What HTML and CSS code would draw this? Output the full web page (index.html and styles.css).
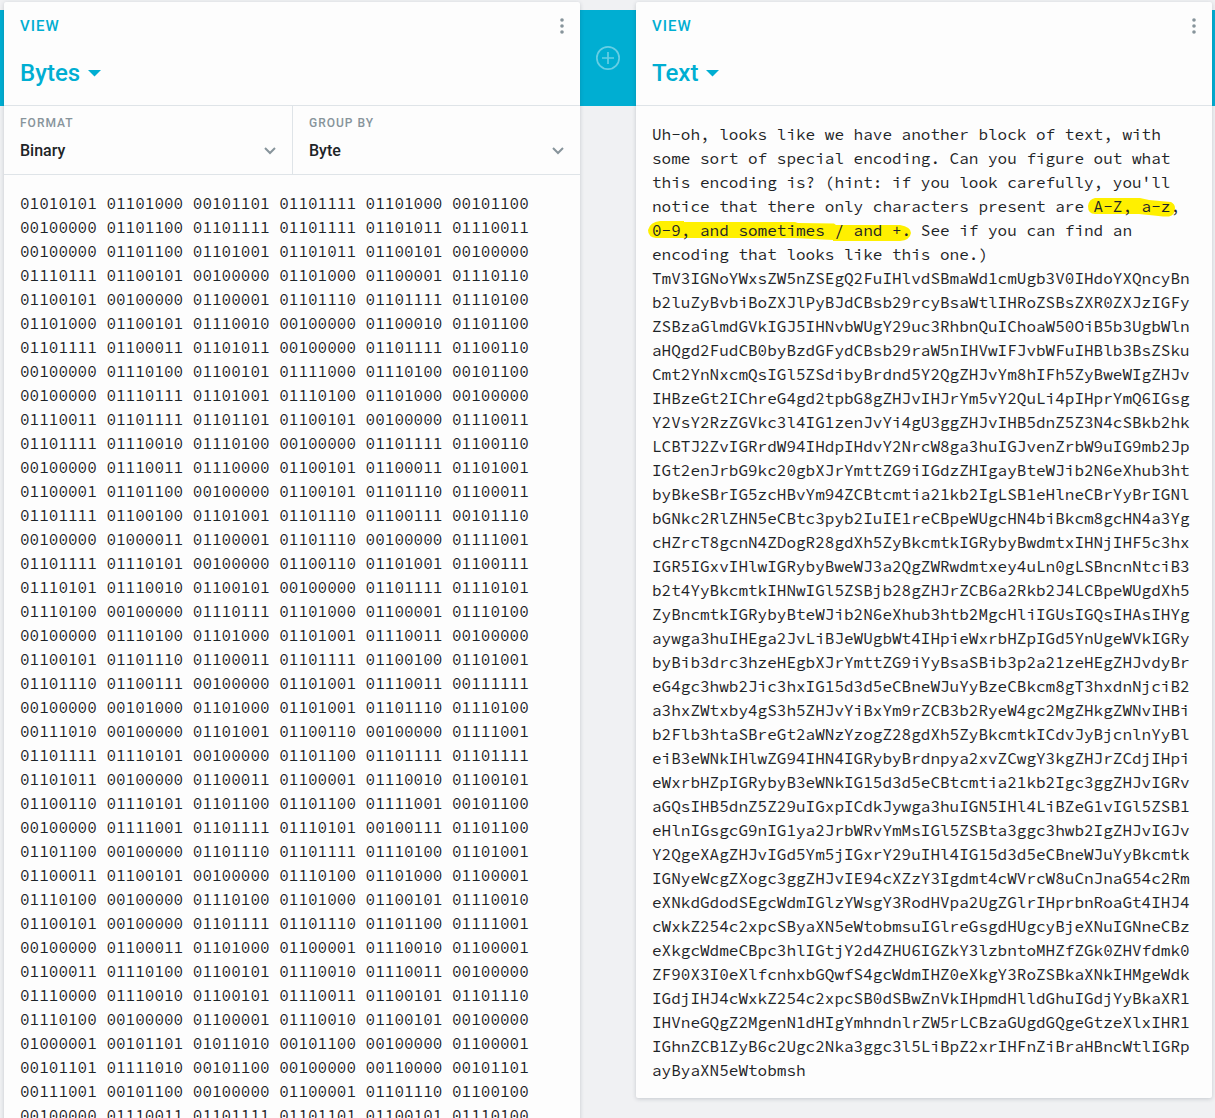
FILE: index.html
```html
<!DOCTYPE html>
<html lang="en">
<head>
<meta charset="utf-8">
<title>Bytes to Text</title>
<link rel="stylesheet" href="styles.css">
</head>
<body>
<main class="pipeline">
  <div class="pipe"></div>
  <section class="brick">
    <header class="brick-header">
      <div class="brick-top">
        <a class="brick-kind" href="#">VIEW</a>
        <button class="icon-button" type="button" aria-label="Brick menu">
          <svg width="4" height="16" viewBox="0 0 4 16"><g fill="#87949b"><circle cx="2" cy="2" r="1.8"/><circle cx="2" cy="8" r="1.8"/><circle cx="2" cy="14" r="1.8"/></g></svg>
        </button>
      </div>
      <button class="brick-title" type="button">Bytes
        <svg width="13" height="7" viewBox="0 0 13 7"><path d="M0 0H13L6.500 6.500Z" fill="#00aed2"/></svg>
      </button>
    </header>
    <div class="settings">
      <div class="field">
        <label class="field-label" for="format">FORMAT</label>
        <div class="field-control">
          <select class="field-select" id="format"><option>Binary</option></select>
          <svg class="chevron" width="12" height="8" viewBox="0 0 12 8"><path d="M1 1L6 6L11 1" fill="none" stroke="#87949b" stroke-width="2"/></svg>
        </div>
      </div>
      <div class="field">
        <label class="field-label" for="group">GROUP BY</label>
        <div class="field-control">
          <select class="field-select" id="group"><option>Byte</option></select>
          <svg class="chevron" width="12" height="8" viewBox="0 0 12 8"><path d="M1 1L6 6L11 1" fill="none" stroke="#87949b" stroke-width="2"/></svg>
        </div>
      </div>
    </div>
    <div class="content">01010101 01101000 00101101 01101111 01101000 00101100
00100000 01101100 01101111 01101111 01101011 01110011
00100000 01101100 01101001 01101011 01100101 00100000
01110111 01100101 00100000 01101000 01100001 01110110
01100101 00100000 01100001 01101110 01101111 01110100
01101000 01100101 01110010 00100000 01100010 01101100
01101111 01100011 01101011 00100000 01101111 01100110
00100000 01110100 01100101 01111000 01110100 00101100
00100000 01110111 01101001 01110100 01101000 00100000
01110011 01101111 01101101 01100101 00100000 01110011
01101111 01110010 01110100 00100000 01101111 01100110
00100000 01110011 01110000 01100101 01100011 01101001
01100001 01101100 00100000 01100101 01101110 01100011
01101111 01100100 01101001 01101110 01100111 00101110
00100000 01000011 01100001 01101110 00100000 01111001
01101111 01110101 00100000 01100110 01101001 01100111
01110101 01110010 01100101 00100000 01101111 01110101
01110100 00100000 01110111 01101000 01100001 01110100
00100000 01110100 01101000 01101001 01110011 00100000
01100101 01101110 01100011 01101111 01100100 01101001
01101110 01100111 00100000 01101001 01110011 00111111
00100000 00101000 01101000 01101001 01101110 01110100
00111010 00100000 01101001 01100110 00100000 01111001
01101111 01110101 00100000 01101100 01101111 01101111
01101011 00100000 01100011 01100001 01110010 01100101
01100110 01110101 01101100 01101100 01111001 00101100
00100000 01111001 01101111 01110101 00100111 01101100
01101100 00100000 01101110 01101111 01110100 01101001
01100011 01100101 00100000 01110100 01101000 01100001
01110100 00100000 01110100 01101000 01100101 01110010
01100101 00100000 01101111 01101110 01101100 01111001
00100000 01100011 01101000 01100001 01110010 01100001
01100011 01110100 01100101 01110010 01110011 00100000
01110000 01110010 01100101 01110011 01100101 01101110
01110100 00100000 01100001 01110010 01100101 00100000
01000001 00101101 01011010 00101100 00100000 01100001
00101101 01111010 00101100 00100000 00110000 00101101
00111001 00101100 00100000 01100001 01101110 01100100
00100000 01110011 01101111 01101101 01100101 01110100</div>
  </section>
  <div class="pipe">
    <button class="icon-button" type="button" aria-label="Add encoder or viewer">
      <svg width="24" height="24" viewBox="0 0 24 24"><g fill="none" stroke="#66cee4" stroke-width="1.700"><circle cx="12" cy="12" r="11.150"/><path d="M12 6V18M6 12H18"/></g></svg>
    </button>
  </div>
  <section class="brick">
    <header class="brick-header">
      <div class="brick-top">
        <a class="brick-kind" href="#">VIEW</a>
        <button class="icon-button" type="button" aria-label="Brick menu">
          <svg width="4" height="16" viewBox="0 0 4 16"><g fill="#87949b"><circle cx="2" cy="2" r="1.8"/><circle cx="2" cy="8" r="1.8"/><circle cx="2" cy="14" r="1.8"/></g></svg>
        </button>
      </div>
      <button class="brick-title" type="button">Text
        <svg width="13" height="7" viewBox="0 0 13 7"><path d="M0 0H13L6.500 6.500Z" fill="#00aed2"/></svg>
      </button>
    </header>
    <div class="content">Uh-oh, looks like we have another block of text, with some sort of special encoding. Can you figure out what this encoding is? (hint: if you look carefully, you'll notice that there only characters present are <mark class="marker"><svg class="stroke stroke-short" width="89" height="20" viewBox="0 0 89 20"><path d="M8 0H53L62 2L84 4Q88 6 88 10Q88 17 82 18.500H76L62 17L52 16H8Q1 16 1 8Q2 1 8 0Z" fill="#fff000"/></svg>A-Z, a-z</mark>, <mark class="marker"><svg class="stroke stroke-long" width="264" height="21" viewBox="0 0 264 21"><path d="M12 0H36V1H147L150 2L186 2.500L188 4H252Q263 6 263 12Q262 19 252 20H185V19L147 17H8Q0 16 0 9Q2 1 12 0Z" fill="#fff000"/></svg>0-9, and sometimes / and +.</mark> See if you can find an encoding that looks like this one.)
TmV3IGNoYWxsZW5nZSEgQ2FuIHlvdSBmaWd1cmUgb3V0IHdoYXQncyBn
b2luZyBvbiBoZXJlPyBJdCBsb29rcyBsaWtlIHRoZSBsZXR0ZXJzIGFy
ZSBzaGlmdGVkIGJ5IHNvbWUgY29uc3RhbnQuIChoaW50OiB5b3UgbWln
aHQgd2FudCB0byBzdGFydCBsb29raW5nIHVwIFJvbWFuIHBlb3BsZSku
Cmt2YnNxcmQsIGl5ZSdibyBrdnd5Y2QgZHJvYm8hIFh5ZyBweWIgZHJv
IHBzeGt2IChreG4gd2tpbG8gZHJvIHJrYm5vY2QuLi4pIHprYmQ6IGsg
Y2VsY2RzZGVkc3l4IG1zenJvYi4gU3ggZHJvIHB5dnZ5Z3N4cSBkb2hk
LCBTJ2ZvIGRrdW94IHdpIHdvY2NrcW8ga3huIGJvenZrbW9uIG9mb2Jp
IGt2enJrbG9kc20gbXJrYmttZG9iIGdzZHIgayBteWJib2N6eXhub3ht
byBkeSBrIG5zcHBvYm94ZCBtcmtia21kb2IgLSB1eHlneCBrYyBrIGNl
bGNkc2RlZHN5eCBtc3pyb2IuIE1reCBpeWUgcHN4biBkcm8gcHN4a3Yg
cHZrcT8gcnN4ZDogR28gdXh5ZyBkcmtkIGRybyBwdmtxIHNjIHF5c3hx
IGR5IGxvIHlwIGRybyBweWJ3a2QgZWRwdmtxey4uLn0gLSBncnNtciB3
b2t4YyBkcmtkIHNwIGl5ZSBjb28gZHJrZCB6a2Rkb2J4LCBpeWUgdXh5
ZyBncmtkIGRybyBteWJib2N6eXhub3htb2MgcHliIGUsIGQsIHAsIHYg
aywga3huIHEga2JvLiBJeWUgbWt4IHpieWxrbHZpIGd5YnUgeWVkIGRy
byBib3drc3hzeHEgbXJrYmttZG9iYyBsaSBib3p2a21zeHEgZHJvdyBr
eG4gc3hwb2Jic3hxIG15d3d5eCBneWJuYyBzeCBkcm8gT3hxdnNjciB2
a3hxZWtxby4gS3h5ZHJvYiBxYm9rZCB3b2RyeW4gc2MgZHkgZWNvIHBi
b2Flb3htaSBreGt2aWNzYzogZ28gdXh5ZyBkcmtkICdvJyBjcnlnYyBl
eiB3eWNkIHlwZG94IHN4IGRybyBrdnpya2xvZCwgY3kgZHJrZCdjIHpi
eWxrbHZpIGRybyB3eWNkIG15d3d5eCBtcmtia21kb2Igc3ggZHJvIGRv
aGQsIHB5dnZ5Z29uIGxpICdkJywga3huIGN5IHl4LiBZeG1vIGl5ZSB1
eHlnIGsgcG9nIG1ya2JrbWRvYmMsIGl5ZSBta3ggc3hwb2IgZHJvIGJv
Y2QgeXAgZHJvIGd5Ym5jIGxrY29uIHl4IG15d3d5eCBneWJuYyBkcmtk
IGNyeWcgZXogc3ggZHJvIE94cXZzY3Igdmt4cWVrcW8uCnJnaG54c2Rm
eXNkdGdodSEgcWdmIGlzYWsgY3RodHVpa2UgZGlrIHprbnRoaGt4IHJ4
cWxkZ254c2xpcSByaXN5eWtobmsuIGlreGsgdHUgcyBjeXNuIGNneCBz
eXkgcWdmeCBpc3hlIGtjY2d4ZHU6IGZkY3lzbntoMHZfZGk0ZHVfdmk0
ZF90X3I0eXlfcnhxbGQwfS4gcWdmIHZ0eXkgY3RoZSBkaXNkIHMgeWdk
IGdjIHJ4cWxkZ254c2xpcSB0dSBwZnVkIHpmdHlldGhuIGdjYyBkaXR1
IHVneGQgZ2MgenN1dHIgYmhndnlrZW5rLCBzaGUgdGQgeGtzeXlxIHR1
IGhnZCB1ZyB6c2Ugc2Nka3ggc3l5LiBpZ2xrIHFnZiBraHBncWtlIGRp
ayByaXN5eWtobmsh</div>
  </section>
  <div class="pipe"></div>
</main>
</body>
</html>
```

FILE: styles.css
```css
* {
  box-sizing: border-box;
}

body {
  margin: 0;
  background: #f0f1f3;
  color: #1d2427;
  font-family: Roboto, "Liberation Sans", sans-serif;
}

button {
  margin: 0;
  padding: 0;
  border: 0;
  background: none;
  font: inherit;
  color: inherit;
  cursor: pointer;
}

svg {
  display: block;
}

.pipeline {
  display: grid;
  grid-template-columns: 4px 1fr 56px 1fr 3px;
  align-items: start;
  height: 100vh;
  padding-top: 2px;
  overflow: hidden;
}

.pipe {
  display: flex;
  align-items: center;
  justify-content: center;
  height: 96px;
  margin-top: 8px;
  background: #00aed2;
}

.brick {
  min-width: 0;
  background: #fdfdfd;
  border-radius: 2px;
  box-shadow: 0 1px 4px rgba(30, 45, 60, 0.2);
  isolation: isolate;
}

.brick-header {
  padding: 12px 16px 16px;
  border-bottom: 1px solid #dfe4e8;
}

.brick-top {
  display: flex;
  align-items: center;
  justify-content: space-between;
  height: 24px;
  margin-bottom: 19px;
}

.brick-kind {
  color: #00aed2;
  font-size: 15px;
  font-weight: 500;
  letter-spacing: 1px;
  text-decoration: none;
}

.brick-title {
  display: flex;
  align-items: center;
  gap: 8px;
  color: #00aed2;
  font-size: 24px;
  font-weight: 500;
  line-height: 32px;
}

.settings {
  display: grid;
  grid-template-columns: 1fr 1fr;
  border-bottom: 1px solid #dfe4e8;
}

.field {
  padding: 9px 16px 11px;
}

.field + .field {
  border-left: 1px solid #dfe4e8;
}

.field-label {
  display: block;
  margin-bottom: 8px;
  color: #87949b;
  font-size: 12px;
  font-weight: 500;
  line-height: 16px;
  letter-spacing: 1px;
}

.field-control {
  display: grid;
  align-items: center;
}

.field-select,
.chevron {
  grid-area: 1 / 1;
}

.field-select {
  width: 100%;
  height: 24px;
  padding: 0;
  border: 0;
  background: none;
  appearance: none;
  color: inherit;
  font: 500 16px/24px Roboto, "Liberation Sans", sans-serif;
}

.chevron {
  justify-self: end;
  pointer-events: none;
}

.content {
  padding: 16px;
  font-family: "Source Code Pro", "Liberation Mono", monospace;
  font-size: 16px;
  line-height: 24px;
  white-space: pre-wrap;
  overflow-wrap: anywhere;
}

.marker {
  position: relative;
  background: none;
  color: inherit;
}

.stroke {
  position: absolute;
  z-index: -1;
}

.stroke-short {
  top: 2px;
  left: -7px;
}

.stroke-long {
  top: 1px;
  left: -4px;
}
```
